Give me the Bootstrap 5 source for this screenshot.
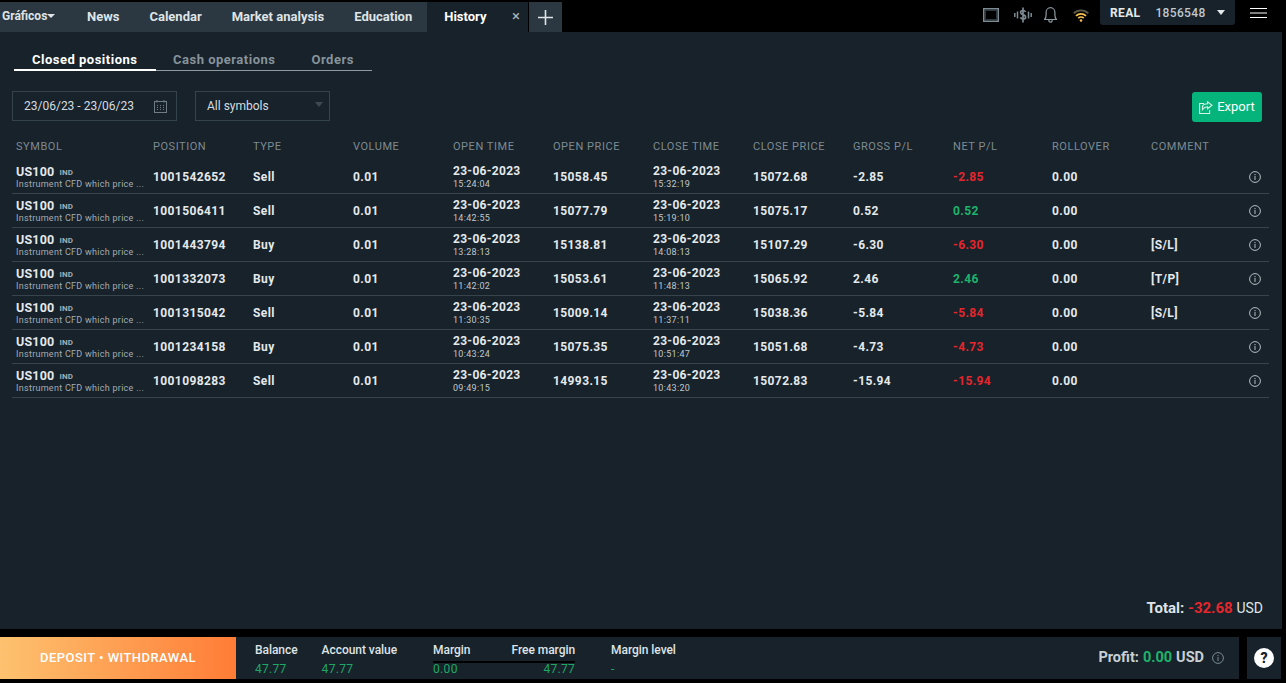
<!DOCTYPE html>
<html lang="en">
<head>
  <meta charset="UTF-8">
  <title>History</title>
  <meta name="viewport" content="width=device-width, initial-scale=1">
  <link href="https://cdn.jsdelivr.net/npm/bootstrap@5.3.3/dist/css/bootstrap.min.css" rel="stylesheet">
  <style>
    html, body { height: 100%; }
    body { background: #000; color: #e4e9ec; font-family: Roboto, "Liberation Sans", sans-serif; font-size: 13px; overflow: hidden; }
    .app { height: 683px; width: 1286px; display: flex; flex-direction: column; }

    /* top bar */
    .topbar { height: 32px; padding-top: 2px; flex: none; }
    .tabs { height: 30px; background: #2b3841; width: 528px; }
    .tab-item { color: #dfe4e7; font-weight: 700; font-size: 13px; line-height: 30px; padding: 0 15px; white-space: nowrap; }
    .tab-first { color: #dfe4e7; font-weight: 700; font-size: 12px; line-height: 29px; padding-left: 2px; width: 72px; }
    .caret-down { display: inline-block; border-left: 4px solid transparent; border-right: 4px solid transparent; border-top: 4px solid currentColor; vertical-align: 2px; }
    .tab-active { background: #17222a; flex: 1; padding: 0 8px 0 17px; color: #fff; }
    .tab-close { color: #a9b3b9; font-size: 15px; font-weight: 400; margin-left: auto; line-height: 28px; }
    .tab-plus { width: 33px; height: 30px; margin-left: 1px; background: #2b3841; }
    .acct { width: 135px; height: 25px; margin-top: -2px; background: #17222a; border-radius: 0 0 3px 3px; font-weight: 700; font-size: 12px; color: #e4e9ec; letter-spacing: .35px; padding: 0 10px; }
    .acct-num { color: #bfc8cd; font-weight: 500; margin-left: 15px; }
    .status-icons { height: 26px; gap: 15px; margin-right: 11px; }

    /* main panel */
    .panel { background: #17222a; width: 1282px; height: 597px; flex: none; position: relative; padding: 0 12px; }
    .subtabs { margin-left: 2px; padding-top: 18px; height: 39px; width: 358px; border-bottom: 1px solid #8f9aa1; font-size: 13px; font-weight: 700; letter-spacing: .5px; }
    .subtab { color: #87939a; line-height: 19px; }
    .subtab-on { color: #fff; width: 142px; padding-left: 18px; height: 21px; border-bottom: 2px solid #fff; }
    .filters { margin-top: 20px; height: 30px; }
    .filter-box { height: 30px; border: 1px solid #35434c; color: #d5dce0; font-size: 12px; padding: 0 9px 0 11px; }
    .btn-export { background: #05b47a; color: #fff; font-size: 13px; width: 70px; height: 30px; padding: 0; border: 0; border-radius: 3px; margin: 1px 8px 0 auto; }
    .btn-export:hover { background: #05b47a; color: #fff; }

    .grid-table { table-layout: fixed; width: 1257px; margin: 5px 0 0; --bs-table-bg: transparent; --bs-table-color: #e4e9ec; }
    .grid-table th { color: #7e8b93; font-weight: 400; font-size: 11px; letter-spacing: .55px; height: 33px; padding: 14px 4px 0 4px; border: 0; text-align: left; white-space: nowrap; vertical-align: top; line-height: 13px; }
    .grid-table td { height: 34px; padding: 2px 4px 0; border-bottom: 1px solid #38444c; vertical-align: middle; font-weight: 700; font-size: 12px; letter-spacing: .4px; white-space: nowrap; line-height: 1; }
    .sym { font-size: 12.5px; letter-spacing: .2px; line-height: 13px; margin-top: 1px; }
    .sym-tag { font-size: 8px; color: #a3adb3; margin-left: 5px; letter-spacing: .2px; vertical-align: 1px; }
    .sym-desc { font-size: 9px; font-weight: 400; color: #a3adb3; letter-spacing: .28px; line-height: 11px; }
    .t-date { font-size: 12px; letter-spacing: .3px; line-height: 13px; margin-top: 1px; }
    .t-hour { font-size: 9px; font-weight: 400; color: #c0c8cc; letter-spacing: .3px; line-height: 11px; margin-top: 1px; }
    .val-up { color: #1eb36c; }
    .val-down { color: #e5262d; }
    .info-icon { display: block; margin-left: auto; margin-right: 4px; }
    .total { position: absolute; right: 19px; top: 565px; font-weight: 700; font-size: 15px; color: #dfe4e7; }
    .total span:last-child { font-weight: 400; font-size: 14px; }

    /* bottom bar */
    .bottombar { margin-top: 8px; height: 42px; flex: none; }
    .stats { width: 1239px; height: 42px; background: #17222a; }
    .deposit { width: 236px; height: 42px; background: linear-gradient(90deg, #fdc26f, #ff7c36); color: #fff; font-weight: 500; font-size: 13px; letter-spacing: .45px; }
    .stat { position: relative; font-size: 12px; font-weight: 500; letter-spacing: -.05px; color: #dfe4e7; line-height: 14px; padding-top: 6px; white-space: nowrap; }
    .stat-val { color: #1ea868; font-weight: 400; letter-spacing: .3px; margin-top: 5px; }
    .margin-pair { border-bottom: 0; width: 142px; margin-left: 36px; position: relative; }
    .margin-rule { position: absolute; left: 0; right: 0; top: 24px; height: 2px; background: #000; }
    .profit { font-size: 14.5px; font-weight: 700; color: #c9d0d4; margin-left: auto; padding-right: 15px; }
    .help-box { width: 34px; height: 42px; margin-left: 8px; background: #17222a; }
    .help-dot { width: 20px; height: 20px; border-radius: 50%; background: #fff; color: #17222a; font-weight: 900; font-size: 14px; line-height: 20px; text-align: center; }
  </style>
</head>
<body>
  <div class="app">

    <div class="topbar d-flex">
      <div class="tabs d-flex flex-none">
        <div class="tab-first">Gráficos<span class="caret-down"></span></div>
        <div class="tab-item">News</div>
        <div class="tab-item">Calendar</div>
        <div class="tab-item">Market analysis</div>
        <div class="tab-item">Education</div>
        <div class="tab-item tab-active d-flex">History<span class="tab-close">×</span></div>
      </div>
      <div class="tab-plus d-flex align-items-center justify-content-center">
        <svg width="15" height="15" viewBox="0 0 15 15"><path d="M7.5 0v15M0 7.5h15" stroke="#dfe4e7" stroke-width="1.6"/></svg>
      </div>
      <div class="status-icons d-flex align-items-center ms-auto">
        <svg width="16" height="14" viewBox="0 0 16 14" fill="none"><rect x=".75" y=".75" width="14.500" height="12.500" stroke="#7c8a93" stroke-width="1.500"/><rect x="2.500" y="2.500" width="11" height="9" stroke="#2c373e"/></svg>
        <svg width="18" height="16" viewBox="0 0 18 16" fill="none" stroke="#7c8a93"><path d="M.8 6v4M3.500 4.500v7M14.500 4.500v7M17.200 6v4" stroke-width="1.500"/><path d="M11.500 5c-.4-1-1.400-1.500-2.500-1.500-1.400 0-2.400.8-2.400 2 0 2.700 5 1.500 5 4.400 0 1.300-1.200 2.100-2.600 2.100-1.200 0-2.200-.6-2.600-1.700M9 .5v15" stroke-width="1.700"/></svg>
        <svg style="margin-left:-3px" width="13" height="16" viewBox="0 0 13 16" fill="none" stroke="#8d99a1" stroke-width="1.200"><path d="M.6 12.500c1.100-1.200 1.500-2.300 1.500-4.500V5.500C2.100 2.800 4 .7 6.500.7s4.400 2.100 4.400 4.800V8c0 2.200.4 3.300 1.500 4.500z"/><path d="M4.800 13c0 1.200.8 2.200 1.700 2.200s1.700-1 1.700-2.200"/></svg>
        <svg style="margin-left:1px" width="16" height="13" viewBox="0 0 16 13" fill="none" stroke="#f6c04d" stroke-width="1.800"><path d="M.7 4.300c4.100-4 10.500-4 14.600 0" stroke="#5d5a4a"/><path d="M3 6.800c2.800-2.700 7.200-2.700 10 0M5.300 9.100c1.500-1.400 3.900-1.400 5.400 0"/><circle cx="8" cy="11.500" r="1.300" fill="#f6c04d" stroke="none"/></svg>
      </div>
      <div class="acct d-flex align-items-center">
        REAL<span class="acct-num">1856548</span><span class="caret-down ms-auto" style="border-width:5px 4px 0;vertical-align:0"></span>
      </div>
      <div class="d-flex align-items-start" style="width:51px;padding:6px 0 0 15px">
        <svg width="17" height="10" viewBox="0 0 17 10"><path d="M0 .5h17M0 5h17M0 9.500h17" stroke="#fff"/></svg>
      </div>
    </div>

    <div class="panel">
      <div class="subtabs d-flex">
        <div class="subtab subtab-on">Closed positions</div>
        <div class="subtab" style="margin-left:17px">Cash operations</div>
        <div class="subtab" style="margin-left:36px">Orders</div>
      </div>

      <div class="filters d-flex">
        <div class="filter-box d-flex align-items-center justify-content-between" style="width:165px">
          23/06/23 - 23/06/23
          <svg width="13" height="13" viewBox="0 0 13 13" fill="none" stroke="#6f7c85"><rect x=".5" y="1.500" width="12" height="11"/><path d="M3 0v2.500M10 0v2.500"/><path d="M3 5.500h7M3 7.500h7M3 9.500h7" stroke-dasharray="1 2"/></svg>
        </div>
        <div class="filter-box d-flex align-items-center justify-content-between" style="width:135px;margin-left:18px;padding-right:6px">
          All symbols
          <span class="caret-down" style="color:#3e4a52;border-width:5px 4px 0;margin-top:-4px"></span>
        </div>
        <button class="btn btn-export d-flex align-items-center justify-content-center gap-1">
          <svg width="14" height="13" viewBox="0 0 14 13" fill="none" stroke="#d8f3e8" stroke-width="1.100"><path d="M3.500 5.500c.6-1.800 2.200-2.800 5-2.800V.8L13 4.300 8.500 7.800V5.700C6.500 5.700 5 6.300 3.500 8.500z"/><path d="M5 2.500H.6v10h10V9"/></svg>
          Export
        </button>
      </div>

      <table class="table grid-table" id="historyTable">
        <colgroup>
          <col style="width:137px"><col style="width:100px"><col style="width:100px"><col style="width:100px">
          <col style="width:100px"><col style="width:100px"><col style="width:100px"><col style="width:100px">
          <col style="width:100px"><col style="width:99px"><col style="width:99px"><col style="width:60px"><col style="width:62px">
        </colgroup>
        <thead>
          <tr>
            <th>SYMBOL</th><th>POSITION</th><th>TYPE</th><th>VOLUME</th><th>OPEN TIME</th><th>OPEN PRICE</th>
            <th>CLOSE TIME</th><th>CLOSE PRICE</th><th>GROSS P/L</th><th>NET P/L</th><th>ROLLOVER</th><th>COMMENT</th><th></th>
          </tr>
        </thead>
        <tbody id="rows"></tbody>
      </table>

      <div class="total">Total: <span class="val-down">-32.68</span> <span>USD</span></div>
    </div>

    <div class="bottombar d-flex">
      <div class="stats d-flex">
        <div class="deposit d-flex align-items-center justify-content-center">DEPOSIT • WITHDRAWAL</div>
        <div class="stat" style="margin-left:19px">Balance<div class="stat-val">47.77</div></div>
        <div class="stat" style="margin-left:24px">Account value<div class="stat-val">47.77</div></div>
        <div class="margin-pair d-flex justify-content-between">
          <div class="margin-rule"></div>
          <div class="stat">Margin<div class="stat-val">0.00</div></div>
          <div class="stat text-end">Free margin<div class="stat-val">47.77</div></div>
        </div>
        <div class="stat" style="margin-left:36px">Margin level<div class="stat-val">-</div></div>
        <div class="profit d-flex align-items-center gap-1">
          Profit: <span class="val-up">0.00</span> USD
          <svg class="ms-1" width="12" height="12" viewBox="0 0 12 12" fill="none" stroke="#7c8a93"><circle cx="6" cy="6" r="5.400"/><path d="M6 5v4M6 3v1.200"/></svg>
        </div>
      </div>
      <div class="help-box d-flex align-items-center justify-content-center">
        <div class="help-dot">?</div>
      </div>
    </div>
  </div>

  <script src="https://cdn.jsdelivr.net/npm/bootstrap@5.3.3/dist/js/bootstrap.bundle.min.js"></script>
  <script>
    const trades = [
      ['1001542652', 'Sell', '15:24:04', '15058.45', '15:32:19', '15072.68', '-2.85', ''],
      ['1001506411', 'Sell', '14:42:55', '15077.79', '15:19:10', '15075.17', '0.52', ''],
      ['1001443794', 'Buy', '13:28:13', '15138.81', '14:08:13', '15107.29', '-6.30', '[S/L]'],
      ['1001332073', 'Buy', '11:42:02', '15053.61', '11:48:13', '15065.92', '2.46', '[T/P]'],
      ['1001315042', 'Sell', '11:30:35', '15009.14', '11:37:11', '15038.36', '-5.84', '[S/L]'],
      ['1001234158', 'Buy', '10:43:24', '15075.35', '10:51:47', '15051.68', '-4.73', ''],
      ['1001098283', 'Sell', '09:49:15', '14993.15', '10:43:20', '15072.83', '-15.94', '']
    ];
    const infoIcon = '<svg class="info-icon" width="12" height="12" viewBox="0 0 12 12" fill="none" stroke="#b4bdc2"><circle cx="6" cy="6" r="5.400"/><path d="M6 5v4M6 3v1.200"/></svg>';

    let html = '';
    trades.forEach(t => {
      const netClass = t[6].startsWith('-') ? 'val-down' : 'val-up';
      html += `<tr>
        <td><div class="sym">US100<span class="sym-tag">IND</span></div><div class="sym-desc">Instrument CFD which price ...</div></td>
        <td>${t[0]}</td><td>${t[1]}</td><td>0.01</td>
        <td><div class="t-date">23-06-2023</div><div class="t-hour">${t[2]}</div></td>
        <td>${t[3]}</td>
        <td><div class="t-date">23-06-2023</div><div class="t-hour">${t[4]}</div></td>
        <td>${t[5]}</td><td>${t[6]}</td><td class="${netClass}">${t[6]}</td><td>0.00</td><td>${t[7]}</td>
        <td>${infoIcon}</td>
      </tr>`;
    });
    document.getElementById('rows').innerHTML = html;
  </script>
</body>
</html>
